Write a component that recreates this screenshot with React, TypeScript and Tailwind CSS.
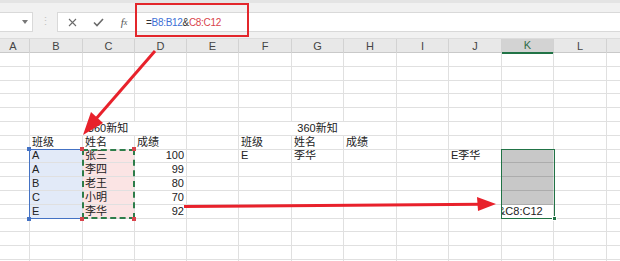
import React from "react";

type Cell = {
  t?: string;
  right?: boolean;
  center?: boolean;
  span?: number;
  bg?: string;
  shift?: boolean;
};

const letters = ["A", "B", "C", "D", "E", "F", "G", "H", "I", "J", "K", "L", ""];

const gridCols =
  "grid grid-cols-[30px_53px_52px_52px_52px_53px_52px_53px_52px_53px_52px_53px_53px]";

const blank = (n: number): Cell[] => Array.from({ length: n }, () => ({}));

const blueBg = "bg-[#e2eaf8]";
const pinkBg = "bg-[#fbe4e4]";
const greyBg = "bg-[#c8c8c8] border-b-[#acacac]";

const dataRow = (b: string, c: string, d: string, k: Cell, f?: string, g?: string, j?: string): Cell[] => [
  {},
  { t: b, bg: blueBg },
  { t: c, bg: pinkBg },
  { t: d, right: true },
  {},
  { t: f },
  { t: g },
  {},
  {},
  { t: j },
  k,
  {},
  {},
];

const rows: Cell[][] = [
  blank(13),
  blank(13),
  blank(13),
  blank(13),
  blank(13),
  [
    {},
    { t: "360新知", span: 3, center: true },
    {},
    { t: "360新知", span: 3, center: true },
    {},
    {},
    {},
    {},
    {},
  ],
  [
    {},
    { t: "班级" },
    { t: "姓名" },
    { t: "成绩" },
    {},
    { t: "班级" },
    { t: "姓名" },
    { t: "成绩" },
    {},
    {},
    {},
    {},
    {},
  ],
  dataRow("A", "张三", "100", { bg: greyBg }, "E", "李华", "E李华"),
  dataRow("A", "李四", "99", { bg: greyBg }),
  dataRow("B", "老王", "80", { bg: greyBg }),
  dataRow("C", "小明", "70", { bg: greyBg }),
  dataRow("E", "李华", "92", { t: "&C8:C12", shift: true }),
  blank(13),
  blank(13),
  blank(13),
  blank(13),
];

const spanClass = (n?: number) => (n === 3 ? "col-span-3" : "");

const Toolbar = () => (
  <div className="h-[36px] bg-[#f1f1f1] flex items-start pt-[9px] border-b border-[#dcdcdc]">
    <div className="w-[33px] h-[20px] bg-white border border-l-0 border-[#d9d9d9] flex items-center justify-end pr-[4px]">
      <svg width="6" height="4" viewBox="0 0 6 4">
        <path d="M0 0 L6 0 L3 4 Z" fill="#777" />
      </svg>
    </div>
    <div className="w-[24px] flex justify-center pt-[3px] text-[#c4c4c4] text-[11px] leading-[13px]">⋮</div>
    <div className="flex-1 h-[20px] bg-white border border-r-0 border-[#d9d9d9] flex items-center">
      <div className="w-[26px] flex justify-center ml-[1px]">
        <svg width="9" height="9" viewBox="0 0 9 9">
          <path d="M1 1 L8 8 M8 1 L1 8" stroke="#6b6b6b" strokeWidth="1.1" />
        </svg>
      </div>
      <div className="w-[26px] flex justify-center">
        <svg width="11" height="9" viewBox="0 0 11 9">
          <path d="M1 4.5 L4 7.5 L10 1" stroke="#6b6b6b" strokeWidth="1.6" fill="none" />
        </svg>
      </div>
      <div className="w-[26px] flex justify-center font-['Liberation_Serif',serif] italic text-[11px] text-[#555]">
        f<span className="text-[8px] mt-[3px]">x</span>
      </div>
      <div className="ml-[9px] font-['Liberation_Sans',sans-serif] text-[10px] tracking-[-0.3px] text-[#333]">
        =<span className="text-[#3d6fd6]">B8:B12</span>&amp;<span className="text-[#d9434b]">C8:C12</span>
      </div>
    </div>
  </div>
);

const Header = () => (
  <div className={`${gridCols} h-[14px] bg-[#e8e8e8] border-b border-[#c9c9c9]`}>
    {letters.map((l, i) => (
      <div
        key={i}
        className={`flex items-center justify-center text-[11px] leading-[13px] border-r border-[#d2d2d2] ${
          l === "K" ? "bg-[#d3d3d3] text-[#2f6b48] border-b-2 border-b-[#217346]" : "text-[#444]"
        }`}
      >
        {l === "A" ? <span className="-ml-[3px]">A</span> : l}
      </div>
    ))}
  </div>
);

export default function App() {
  return (
    <div className="relative w-[620px] h-[261px] overflow-hidden bg-white font-['Liberation_Sans','Noto_Sans_CJK_SC',sans-serif]">
      <div className="h-[3px] bg-[#e4e4e4]" />
      <Toolbar />
      <Header />
      <div>
        {rows.map((row, ri) => (
          <div key={ri} className={`${gridCols} h-[13.8px]`}>
            {row.map((c, ci) => (
              <div
                key={ci}
                className={`${spanClass(c.span)} border-r border-b border-[#e0e0e0] overflow-hidden whitespace-nowrap flex items-end text-[11px] leading-[13px] text-[#222] px-[2px] ${
                  c.bg ?? ""
                } ${c.right ? "justify-end" : ""} ${c.center ? "justify-center" : ""}`}
              >
                {c.shift ? <span className="-ml-[6px]">{c.t}</span> : c.t}
              </div>
            ))}
          </div>
        ))}
      </div>

      {/* formula box highlight */}
      <div className="absolute left-[135px] top-[3px] w-[114px] h-[34px] border-[2.5px] border-[#e3262b]" />

      {/* B8:B12 reference */}
      <div className="absolute left-[29px] top-[149px] w-[53px] h-[70px] border-l-[1.5px] border-t-[1.5px] border-b-[1.5px] border-[#4472c4]" />
      <div className="absolute left-[27px] top-[147px] w-[4px] h-[4px] bg-[#4472c4]" />
      <div className="absolute left-[27px] top-[217px] w-[4px] h-[4px] bg-[#4472c4]" />

      {/* C8:C12 copy marquee */}
      <div className="absolute left-[82px] top-[149px] w-[53px] h-[70px] border-2 border-dashed border-[#2e7d4a]" />
      <div className="absolute left-[80px] top-[147px] w-[4px] h-[4px] bg-[#d9434b]" />
      <div className="absolute left-[132px] top-[147px] w-[4px] h-[4px] bg-[#d9434b]" />
      <div className="absolute left-[80px] top-[217px] w-[4px] h-[4px] bg-[#d9434b]" />
      <div className="absolute left-[132px] top-[217px] w-[4px] h-[4px] bg-[#d9434b]" />

      {/* K8:K12 selection */}
      <div className="absolute left-[501px] top-[149px] w-[54px] h-[70px] border-[1.5px] border-[#217346]" />
      <div className="absolute left-[552px] top-[216px] w-[5px] h-[5px] bg-[#217346] border border-white" />

      <svg className="absolute inset-0 pointer-events-none" width="620" height="261">
        <line x1="155" y1="51" x2="95" y2="120" stroke="#e8212b" strokeWidth="3" />
        <polygon points="83,135 103,123 91,112" fill="#e8212b" />
        <line x1="184" y1="206.5" x2="482" y2="204.3" stroke="#e8212b" strokeWidth="3" />
        <polygon points="496,204 477,197 478,211" fill="#e8212b" />
      </svg>
    </div>
  );
}
